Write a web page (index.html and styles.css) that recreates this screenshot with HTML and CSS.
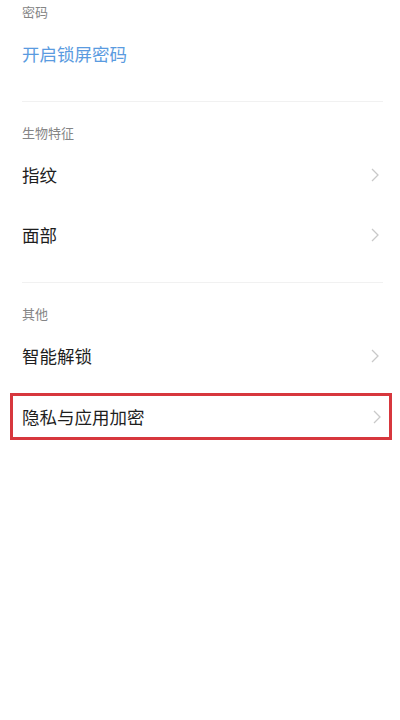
FILE: index.html
```html
<!DOCTYPE html>
<html lang="zh-CN">
<head>
<meta charset="utf-8">
<link rel="stylesheet" href="styles.css">
</head>
<body>
<div class="page">
  <section class="section first">
    <div class="label">密码</div>
    <div class="row"><span class="text blue">开启锁屏密码</span></div>
  </section>
  <div class="divider"></div>
  <section class="section">
    <div class="label">生物特征</div>
    <div class="row"><span class="text">指纹</span><svg class="chev" width="8" height="14" viewBox="0 0 8 14"><path d="M1 1 L7 7 L1 13" fill="none" stroke="#c9c9c9" stroke-width="1.3"/></svg></div>
    <div class="row"><span class="text">面部</span><svg class="chev" width="8" height="14" viewBox="0 0 8 14"><path d="M1 1 L7 7 L1 13" fill="none" stroke="#c9c9c9" stroke-width="1.3"/></svg></div>
  </section>
  <div class="divider"></div>
  <section class="section">
    <div class="label">其他</div>
    <div class="row"><span class="text">智能解锁</span><svg class="chev" width="8" height="14" viewBox="0 0 8 14"><path d="M1 1 L7 7 L1 13" fill="none" stroke="#c9c9c9" stroke-width="1.3"/></svg></div>
    <div class="row highlight"><span class="text">隐私与应用加密</span><svg class="chev" width="8" height="14" viewBox="0 0 8 14"><path d="M1 1 L7 7 L1 13" fill="none" stroke="#c9c9c9" stroke-width="1.3"/></svg></div>
  </section>
</div>
</body>
</html>
```

FILE: styles.css
```css
html, body {
  margin: 0;
  padding: 0;
  background: #ffffff;
}
body {
  font-family: "Noto Sans CJK SC", "Noto Sans", sans-serif;
  width: 400px;
  height: 720px;
  overflow: hidden;
}
.page {
  display: flex;
  flex-direction: column;
}
.section {
  display: flex;
  flex-direction: column;
  padding: 21px 0 17px;
}
.section.first {
  padding-top: 2px;
}
.label {
  height: 20px;
  line-height: 20px;
  font-size: 13px;
  color: #858585;
  padding-left: 22px;
  margin-bottom: 2px;
}
.row {
  height: 60px;
  display: flex;
  align-items: center;
  justify-content: space-between;
  padding: 0 21px 0 22px;
}
.text {
  font-size: 17.5px;
  color: #1e1e1e;
  line-height: 24px;
}
.text.blue {
  color: #5a9be0;
}
.chev {
  display: block;
}
.row.highlight {
  height: 41px;
  margin: 7px 8px 6px 10px;
  border: 3px solid #d7373d;
  padding: 0 8px 0 9px;
}
.divider {
  height: 1px;
  background: #f1f1f1;
  margin: 0 17px 0 22px;
}
```
